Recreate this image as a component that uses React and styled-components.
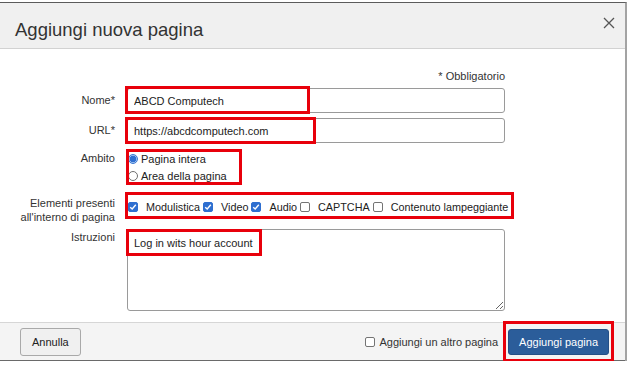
import React from "react";
import styled, { createGlobalStyle } from "styled-components";

const GlobalStyle = createGlobalStyle`
  html, body {
    margin: 0;
    padding: 0;
    background: #fff;
  }
  body {
    font-family: "Liberation Sans", Arial, sans-serif;
    color: #333;
  }
`;

const Dialog = styled.div`
  width: 625px;
  height: 358px;
  margin-top: 2px;
  border-top: 1px solid #5c5c5c;
  border-right: 2px solid #a3a3a3;
  background: #fff;
  display: flex;
  flex-direction: column;
`;

const Header = styled.div`
  box-sizing: border-box;
  height: 46px;
  background: #f0f0f0;
  border-bottom: 1px solid #d2d2d2;
  display: flex;
  align-items: flex-start;
  justify-content: space-between;
  padding: 0 10px 0 15px;
`;

const Title = styled.h1`
  margin: 16px 0 0 0;
  font-size: 18.5px;
  line-height: 22px;
  font-weight: normal;
  color: #333;
`;

const CloseBtn = styled.button`
  border: 0;
  background: none;
  padding: 0;
  margin-top: 14px;
  width: 12px;
  height: 12px;
  display: flex;
  cursor: pointer;
`;

const Body = styled.div`
  padding: 20px 0 11px 0;
  font-size: 11px;
`;

const Required = styled.div`
  width: 505px;
  text-align: right;
  font-size: 11px;
  line-height: 14px;
  margin-bottom: 5px;
`;

const Row = styled.div`
  display: grid;
  grid-template-columns: 115px 378px;
  column-gap: 12px;
  align-items: start;
  margin-top: ${(p) => p.$mt || 0}px;
`;

const Label = styled.label`
  text-align: right;
  font-size: 11px;
  line-height: ${(p) => p.$lh || 14}px;
  padding-top: ${(p) => p.$pt || 0}px;
  color: #333;
`;

const Cell = styled.div`
  position: relative;
`;

const TextInput = styled.input`
  box-sizing: border-box;
  width: 100%;
  height: 25px;
  border: 1px solid #9a9a9a;
  border-radius: 3px;
  padding: 0 6px;
  font-family: "Liberation Sans", Arial, sans-serif;
  font-size: 11px;
  color: #222;
  outline: none;
`;

const TextArea = styled.textarea`
  box-sizing: border-box;
  display: block;
  width: 100%;
  height: 82px;
  border: 1px solid #9a9a9a;
  border-radius: 3px;
  padding: 6px 6px;
  font-family: "Liberation Sans", Arial, sans-serif;
  font-size: 11px;
  line-height: 14px;
  color: #222;
  outline: none;
  resize: both;
`;

const RadioLine = styled.div`
  display: flex;
  align-items: center;
  height: 17px;
  font-size: 11px;
  color: #222;
  padding-left: 1px;
`;

const RadioDot = styled.span`
  box-sizing: border-box;
  width: 10px;
  height: 10px;
  border-radius: 50%;
  margin-right: 3px;
  border: 1px solid ${(p) => (p.$on ? "#3b78d4" : "#6f6f6f")};
  background: ${(p) =>
    p.$on ? "radial-gradient(circle, #2f6fd0 0 55%, #9cc0ee 60%)" : "#fff"};
`;

const Checks = styled.div`
  display: flex;
  align-items: center;
  height: 14px;
  margin-top: 4px;
  padding-left: 1px;
  font-size: 10.8px;
  color: #222;
  white-space: nowrap;
`;

const Box = styled.span`
  box-sizing: border-box;
  width: 10px;
  height: 10px;
  border-radius: 2px;
  display: inline-flex;
  align-items: center;
  justify-content: center;
  border: 1px solid ${(p) => (p.$on ? "#2f6fd0" : "#747474")};
  background: ${(p) => (p.$on ? "#2f6fd0" : "#fff")};
  margin-right: ${(p) => p.$gap ?? 8}px;
  flex: none;
`;

const CheckText = styled.span`
  margin-right: 3px;
`;

const Mark = styled.div`
  position: absolute;
  box-sizing: border-box;
  border: 3px solid #e8000b;
  pointer-events: none;
`;

const Footer = styled.div`
  position: relative;
  height: 37px;
  margin-top: auto;
  background-color: #f4f4f4;
  background-image: radial-gradient(#ededed 0.5px, transparent 0.7px);
  background-size: 4px 4px;
  border-top: 1px solid #d6d6d6;
  border-bottom: 1px solid #6a6a6a;
  display: flex;
  align-items: center;
  padding: 0 16px 0 20px;
`;

const Button = styled.button`
  box-sizing: border-box;
  height: ${(p) => (p.$primary ? 26 : 28)}px;
  padding: 0 ${(p) => (p.$primary ? 10 : 11)}px;
  border-radius: 3px;
  font-family: "Liberation Sans", Arial, sans-serif;
  font-size: 11px;
  border: 1px solid ${(p) => (p.$primary ? "#244f85" : "#a9a9a9")};
  background: ${(p) => (p.$primary ? "#2b5d9a" : "#f0f0f0")};
  color: ${(p) => (p.$primary ? "#fff" : "#222")};
`;

const Spacer = styled.div`
  flex: 1;
`;

const AddAnother = styled.label`
  display: flex;
  align-items: center;
  font-size: 11px;
  color: #333;
  margin-right: 10px;
`;

const Tick = () => (
  <svg width="8" height="8" viewBox="0 0 8 8">
    <path d="M1.2 4.2 L3.2 6 L6.8 1.8" fill="none" stroke="#fff" strokeWidth="1.4" />
  </svg>
);

const CloseIcon = () => (
  <svg width="12" height="12" viewBox="0 0 12 12">
    <path d="M1 1 L11 11 M11 1 L1 11" stroke="#555" strokeWidth="1.3" fill="none" />
  </svg>
);

const elements = [
  { name: "Modulistica", on: true },
  { name: "Video", on: true },
  { name: "Audio", on: true },
  { name: "CAPTCHA", on: false },
  { name: "Contenuto lampeggiante", on: false },
];

export default function App() {
  return (
    <>
      <GlobalStyle />
      <Dialog>
        <Header>
          <Title>Aggiungi nuova pagina</Title>
          <CloseBtn aria-label="Chiudi">
            <CloseIcon />
          </CloseBtn>
        </Header>

        <Body>
          <Required>* Obbligatorio</Required>

          <Row>
            <Label $lh={24}>Nome*</Label>
            <Cell>
              <TextInput readOnly defaultValue="ABCD Computech" />
              <Mark style={{ left: -2, top: -2, width: 185, height: 28 }} />
            </Cell>
          </Row>

          <Row $mt={5}>
            <Label $lh={24}>URL*</Label>
            <Cell>
              <TextInput readOnly defaultValue="https://abcdcomputech.com" />
              <Mark style={{ left: -2, top: -1, width: 191, height: 27 }} />
            </Cell>
          </Row>

          <Row $mt={7}>
            <Label $lh={17}>Ambito</Label>
            <Cell>
              <RadioLine>
                <RadioDot $on />
                Pagina intera
              </RadioLine>
              <RadioLine>
                <RadioDot />
                Area della pagina
              </RadioLine>
              <Mark style={{ left: -1, top: -1, width: 116, height: 36 }} />
            </Cell>
          </Row>

          <Row $mt={12}>
            <Label>
              Elementi presenti
              <br />
              all'interno di pagina
            </Label>
            <Cell>
              <Checks>
                {elements.map((el) => (
                  <React.Fragment key={el.name}>
                    <Box $on={el.on}>{el.on && <Tick />}</Box>
                    <CheckText>{el.name}</CheckText>
                  </React.Fragment>
                ))}
              </Checks>
              <Mark style={{ left: -2, top: -4, width: 389, height: 27 }} />
            </Cell>
          </Row>

          <Row $mt={5}>
            <Label $pt={1}>Istruzioni</Label>
            <Cell>
              <TextArea readOnly defaultValue="Log in wits hour account" />
              <Mark style={{ left: -1, top: 0, width: 136, height: 27 }} />
            </Cell>
          </Row>
        </Body>

        <Footer>
          <Button>Annulla</Button>
          <Spacer />
          <AddAnother>
            <Box $gap={4} />
            Aggiungi un altro pagina
          </AddAnother>
          <Button $primary>Aggiungi pagina</Button>
          <Mark style={{ right: 11, top: -2, width: 111, height: 41 }} />
        </Footer>
      </Dialog>
    </>
  );
}
